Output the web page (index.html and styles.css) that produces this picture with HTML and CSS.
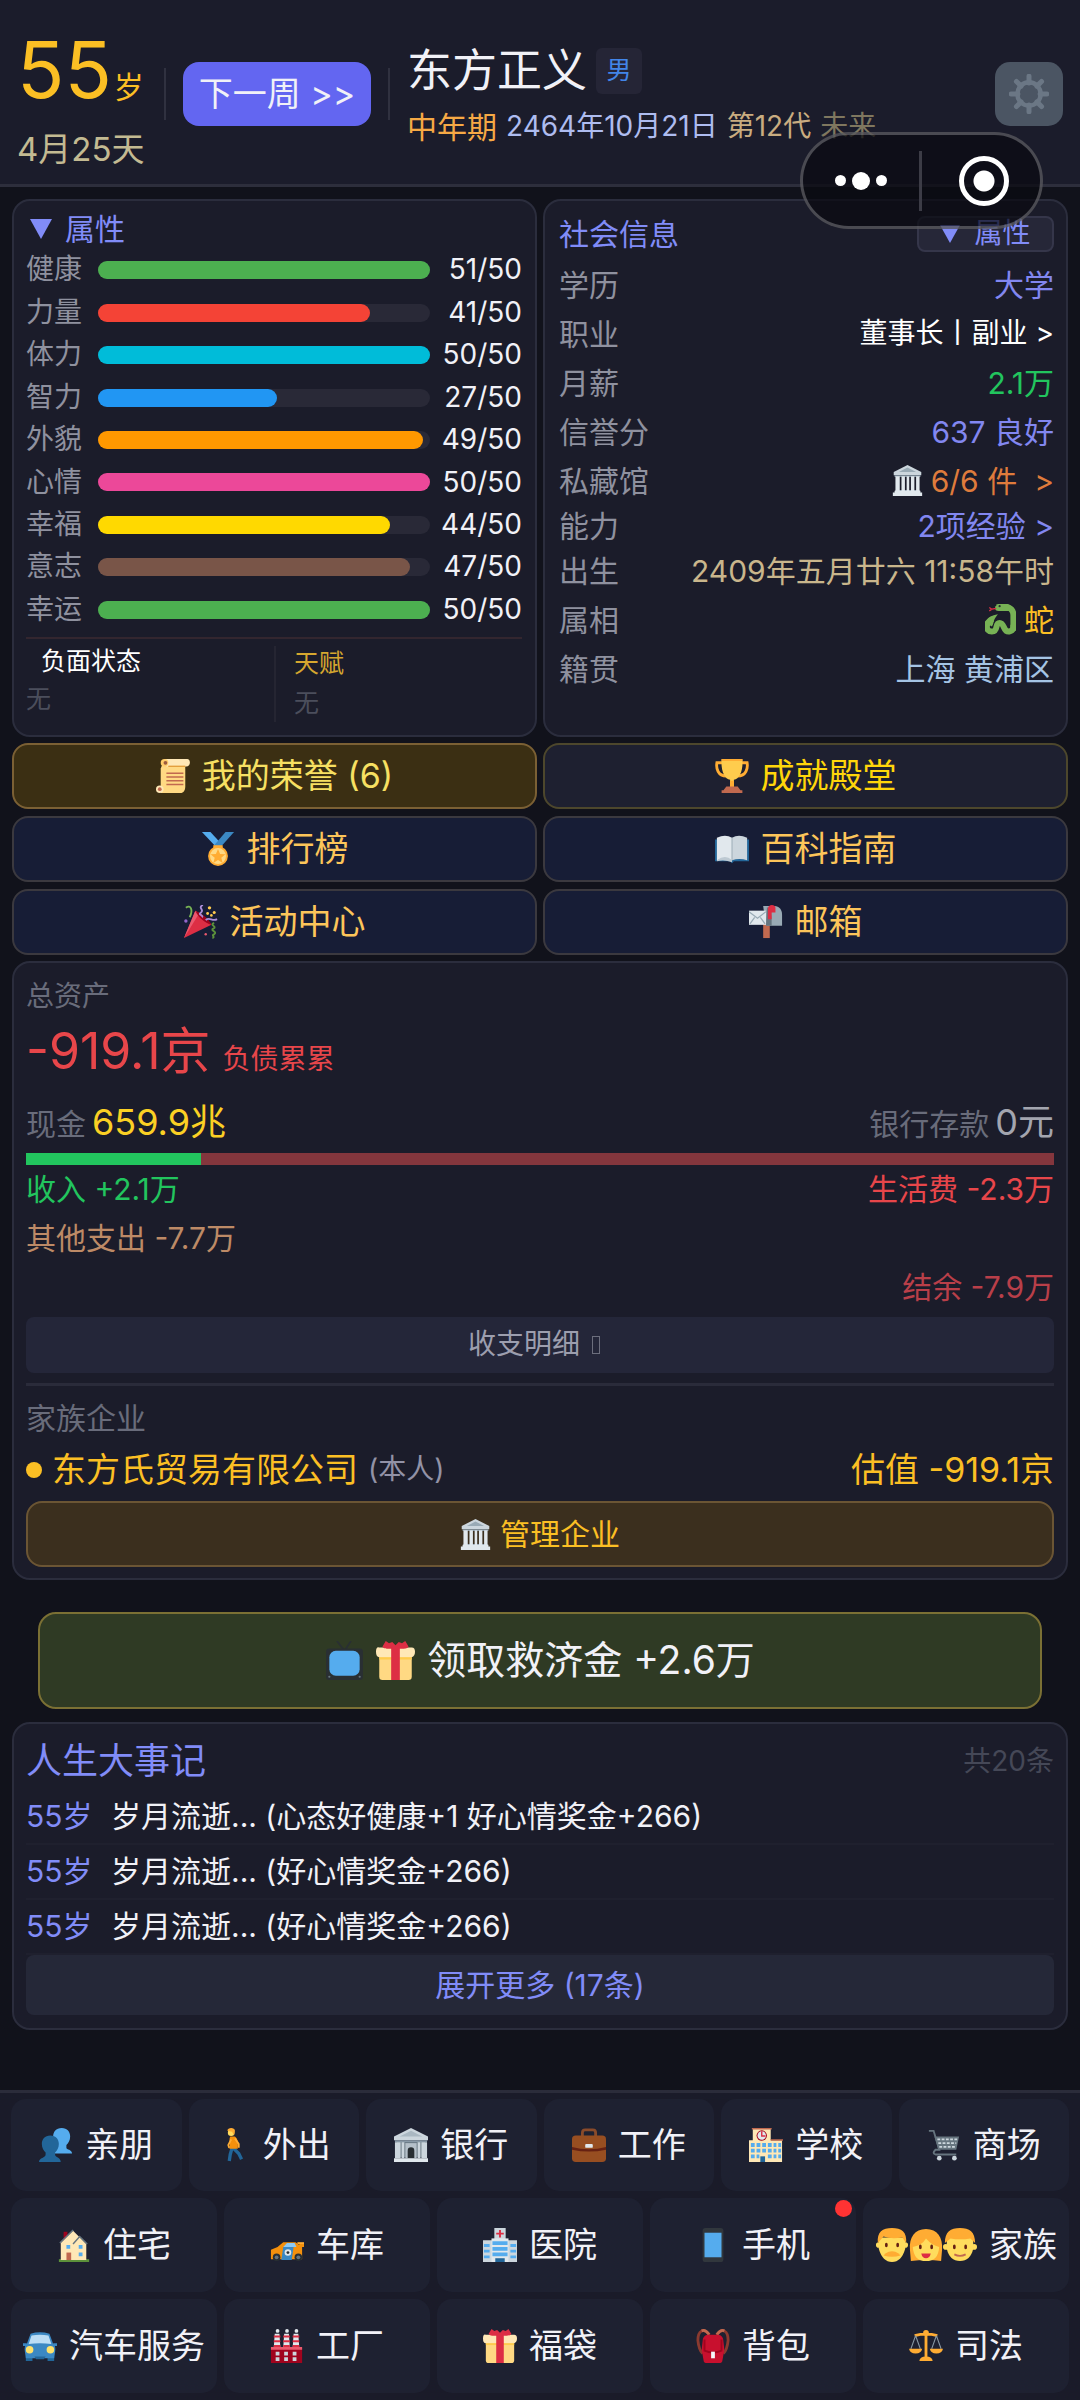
FILE: index.html
```html
<!DOCTYPE html>
<html lang="zh-CN">
<head>
  <meta charset="UTF-8">
  <meta name="viewport" content="width=device-width, initial-scale=1.0">
  <title>东方正义</title>
  <link rel="stylesheet" href="styles.css">
</head>
<body>
  <!-- icon sprite -->
  <svg class="sprite" aria-hidden="true">
    <symbol id="i-gear" viewBox="0 0 36 36">
      <circle cx="18" cy="18" r="10.500" fill="none" stroke="currentColor" stroke-width="4"/>
      <path d="M18 2v6M18 28v6M2 18h6M28 18h6M6.700 6.700l4.200 4.200M25.100 25.100l4.200 4.200M6.700 29.300l4.200-4.200M25.100 10.900l4.200-4.200" stroke="currentColor" stroke-width="4.500" stroke-linecap="round"/>
    </symbol>
    <symbol id="i-temple" viewBox="0 0 36 36">
      <path fill="#ccd6dd" d="M18 0 34 8v4H2V8z"/>
      <path fill="#99aab5" d="M18 3l10 5H8z"/>
      <path fill="#8899a6" d="M3 12h30v2H3zM4 29h28v2H4z"/>
      <path fill="#e1e8ed" d="M4 13h5v17H4zM11 13h4v17h-4zM17 13h3v17h-3zM22 13h4v17h-4zM28 13h4v17h-4zM1 32h34v4H1zM3 30h30v3H3z"/>
    </symbol>
    <symbol id="i-bank" viewBox="0 0 36 36">
      <path fill="#ccd6dd" d="M18 0 36 9v4H0V9z"/>
      <path fill="#aab8c2" d="M18 3l12 6H6z"/>
      <path fill="#66757f" d="M3 14h30v17H3z"/>
      <path fill="#8899a6" d="M1 13h34v2H1z"/>
      <path fill="#ccd6dd" d="M1 15h6v17H1zM8 15h3v17H8zM25 15h3v17h-3zM29 15h6v17h-6z"/>
      <path fill="#b5c0c9" d="M12 16h12v16H12z"/>
      <path fill="#292f33" d="M14.500 32v-8a3.500 3.500 0 0 1 7 0v8z"/>
      <path fill="#e1e8ed" d="M0 32h36v4H0z"/>
    </symbol>
    <symbol id="i-scroll" viewBox="0 0 36 36">
      <path fill="#ffd983" d="M7 5h24v24c0 4-2 7-5 7H5V10z"/>
      <path fill="#ffe8b6" d="M9 0h24c4 0 4 8-1 8H11z"/>
      <path fill="#e39f3d" d="M13 7h18v1.500H13z"/>
      <circle cx="9" cy="4" r="4" fill="#ffcc6b"/><circle cx="10" cy="4" r="2" fill="#9c5b3e"/>
      <circle cx="4" cy="32" r="4" fill="#ffe8b6"/><circle cx="4" cy="32" r="2" fill="#c1694f"/>
      <path d="M11 15h18M11 19h18M11 23h18M11 27h18" stroke="#c1694f" stroke-width="1.600"/>
    </symbol>
    <symbol id="i-trophy" viewBox="0 0 36 36">
      <path d="M9 4H2c-1 6 1 14 10 14M27 4h7c1 6-1 14-10 14" fill="none" stroke="#ffac33" stroke-width="3"/>
      <path fill="#ffcc4d" d="M7 0h22c1 12-3 21-9 22v8h-4v-8C10 21 6 12 7 0z"/>
      <path fill="#ffac33" d="M7 0h22v2H7zM16 23h4v8h-4z"/>
      <path fill="#c1694f" d="M12 29h12l3 4H9zM7 33h22v3H7z"/>
    </symbol>
    <symbol id="i-medal" viewBox="0 0 36 36">
      <path fill="#55acee" d="M1 0h9l12 13-4 5z"/>
      <path fill="#3b88c3" d="M35 0h-9L14 14l4 5z"/>
      <path fill="#ffac33" d="M13 14h10v4H13z"/>
      <circle cx="18" cy="25.500" r="10.500" fill="#ffac33"/>
      <circle cx="18" cy="25.500" r="8.500" fill="#ffd983"/>
      <path fill="#ffac33" d="M18 18l2.200 5.200 5.600.4-4.300 3.600 1.400 5.500-4.900-3-4.900 3 1.400-5.500-4.300-3.600 5.600-.4z"/>
    </symbol>
    <symbol id="i-book" viewBox="0 0 36 36">
      <path fill="#226699" d="M0 8h36v23H20l-2 2-2-2H0z"/>
      <path fill="#e1e8ed" d="M2 6q9-4 16 0v24q-8-3-16 0z"/>
      <path fill="#ccd6dd" d="M34 6q-9-4-16 0v24q8-3 16 0z"/>
      <path d="M18 6v24" stroke="#99aab5"/>
      <path fill="#bdc9d2" d="M2 30q9-7 16 0v2q-8-3-16-1z"/>
    </symbol>
    <symbol id="i-party" viewBox="0 0 36 36">
      <path fill="#dd2e44" d="M0 35 12 6c7 4 13 9 17 15z"/>
      <path fill="#ea596e" d="M0 35 12 6l4 3z"/>
      <path fill="#a0041e" d="M12 6c7 3 14 8 17 15-7-2-14-8-17-15z"/>
      <path d="M2 3c5-4 8 2 4 10" fill="none" stroke="#77b255" stroke-width="2"/>
      <path d="M20 0c-6 3 2 5-2 8-4 2 3 3 1 5M23 16c4-4 7 2 12-1" fill="none" stroke="#aa8dd8" stroke-width="2"/>
      <path d="M32 19c-6 2 4 4-1 6-4 2 5 3 1 6-4 1 2 3-2 4" fill="none" stroke="#5c913b" stroke-width="2"/>
      <g fill="#ffcc4d"><circle cx="27" cy="3" r="1.800"/><circle cx="32" cy="8" r="1.600"/><circle cx="25" cy="9" r="1.500"/><circle cx="29" cy="11" r="1.400"/></g>
      <circle cx="2" cy="17" r="1.800" fill="#9266cc"/><circle cx="23" cy="31" r="1.300" fill="#ea596e"/>
    </symbol>
    <symbol id="i-mailbox" viewBox="0 0 36 36">
      <path fill="#c1694f" d="M15 20h7v15h-7z"/>
      <path fill="#99aab5" d="M15 1h12c5 0 8 4 8 9v12H18z"/>
      <path fill="#66757f" d="M19 2c5 3 5 9 5 20h-6z"/>
      <path fill="#e1e8ed" d="M0 6h18v15H0z"/>
      <path d="M0 7l9 7 9-7M1 20l5-7M17 20l-5-7" fill="none" stroke="#99aab5" stroke-width="1.300"/>
      <path fill="#dd2e44" d="M20 4c0-5 8-5 8-1v5h-4v7h-4z"/>
    </symbol>
    <symbol id="i-snake" viewBox="0 0 36 36">
      <path d="M14 4c10-3 19 0 19 9v18" fill="none" stroke="#77b255" stroke-width="7"/>
      <path fill="#77b255" d="M12 3c3-4 12-3 18-1v6H16c-4 0-5-2-4-5z"/>
      <path d="M9 17C0 21 0 32 8 32s3-10 9-10 4 11 11 10c5-1 5-4 5-8" fill="none" stroke="#77b255" stroke-width="7"/>
      <path fill="#77b255" d="M15 12c-7 1-12 4-14 10l7 4c3-3 0-6 7-14z"/>
      <path d="M13 5l-5 1M8 6 5 4M8 6 5 8" stroke="#dd2e44" stroke-width="1.500"/>
      <circle cx="17" cy="2.500" r="1.300" fill="#292f33"/>
    </symbol>
    <symbol id="i-tv" viewBox="0 0 36 36">
      <path d="M11 0l7 9 6-9" fill="none" stroke="#292f33" stroke-width="1.500"/>
      <rect x="1" y="7" width="34" height="29" rx="3" fill="#292f33"/>
      <rect x="4" y="9" width="28" height="23" rx="6" fill="#55acee"/>
      <circle cx="4" cy="33" r="1" fill="#66757f"/><circle cx="32" cy="33" r="1" fill="#66757f"/>
    </symbol>
    <symbol id="i-gift" viewBox="0 0 36 36">
      <path fill="#ffd983" d="M3 14h30v19c0 2-1 3-3 3H6c-2 0-3-1-3-3z"/>
      <path fill="#ffe8b6" d="M3 6h30q3 0 3 4t-3 5H3q-3 0-3-5t3-4z"/>
      <path fill="#ffcc4d" d="M3 15h30v2H3z"/>
      <path fill="#dd2e44" d="M14 7h8v29h-8zM18 7C14 7 7 8 6 5L9 0l3 2 3-1 3 3 3-3 3 1 3-2 3 5c-1 3-8 2-12 2z"/>
    </symbol>
    <symbol id="i-people" viewBox="0 0 36 36">
      <path fill="#55acee" d="M24 0c6 0 9 4 9 9 0 4-2 7-4 9v3c0 2 6 2 6 6H15V9c0-5 3-9 9-9z"/>
      <path fill="#226699" d="M12 8c6 0 9 4 9 9 0 4-2 7-4 9v2c0 3 6 3 6 8H0c0-5 7-4 7-8v-2c-2-2-4-5-4-9 0-5 3-9 9-9z"/>
    </symbol>
    <symbol id="i-walk" viewBox="0 0 36 36">
      <path d="M17 21l6 6 3 6M16 21l-2 7-1 7" fill="none" stroke="#226699" stroke-width="3.500"/>
      <path fill="#f4900c" d="M14 9h5c4 3 3 9 3 13h-9c2-5-1-9 1-13z"/>
      <path d="M19 11l4 6v4M15 12l-3 6 1 3" fill="none" stroke="#ffac33" stroke-width="2"/>
      <circle cx="15" cy="5" r="3.500" fill="#ffdc5d"/>
      <path fill="#ffac33" d="M11 3c0-4 8-4 8 0l-1 5-2-4z"/>
    </symbol>
    <symbol id="i-briefcase" viewBox="0 0 36 36">
      <path d="M11 9V5q0-3 3-3h8q3 0 3 3v4" fill="none" stroke="#8a4b2a" stroke-width="3"/>
      <rect y="8" width="36" height="28" rx="4" fill="#974e21"/>
      <path fill="#662113" d="M0 20q18 5 36 0v3q-18 4-36 0z"/>
      <rect x="14" y="17" width="8" height="4" rx="1" fill="#e1e8ed"/>
    </symbol>
    <symbol id="i-school" viewBox="0 0 36 36">
      <path fill="#ffe8b6" d="M4 0h19v13h12v23H0V13h4z"/>
      <path fill="#c1694f" d="M3 0h21v1.500H3zM23 12h13v1.500H23z"/>
      <g fill="#55acee"><path d="M2 16h4v4H2zM8 16h4v4H8zM14 16h4v4h-4zM20 16h4v4h-4zM26 16h3v4h-3zM31 16h3v4h-3zM2 22h4v4H2zM8 22h4v4H8zM14 22h4v4h-4zM20 22h4v4h-4zM26 22h3v4h-3zM31 22h3v4h-3zM2 28h4v4H2zM8 28h3v4H8zM20 28h4v4h-4zM26 28h3v4h-3zM31 28h3v4h-3z"/></g>
      <path fill="#226699" d="M12 30h5v6h-5z"/>
      <circle cx="13.500" cy="8" r="5.500" fill="#a0041e"/><circle cx="13.500" cy="8" r="4.500" fill="#e1e8ed"/>
      <path d="M13.500 3.500V8.500h4" fill="none" stroke="#dd2e44" stroke-width="1.500"/>
    </symbol>
    <symbol id="i-cart" viewBox="0 0 36 36">
      <path d="M2 3h5l6 20H9q-4 4 0 5h22" fill="none" stroke="#66757f" stroke-width="2"/>
      <path fill="#66757f" d="M8 9h26l-3 14H12z"/>
      <path d="M11 12h21M12 16h19M13 20h18" stroke="#ccd6dd" stroke-width="2" stroke-dasharray="3 1.500"/>
      <circle cx="13" cy="32" r="2.500" fill="#ccd6dd"/><circle cx="29" cy="32" r="2.500" fill="#ccd6dd"/>
    </symbol>
    <symbol id="i-house" viewBox="0 0 36 36">
      <path fill="#5c913b" d="M2 33h32v3H2z"/>
      <path fill="#a0041e" d="M7 4h4v10H7z"/>
      <path fill="#ffe8b6" d="M4 16 17 3l14 14v17H4z"/>
      <path d="M3 16 17 2M17 17l7-8 8 8" fill="none" stroke="#66757f" stroke-width="1.500"/>
      <path fill="#55acee" d="M10 18h4v4h-4zM23 18h4v4h-4zM23 26h4v4h-4z"/>
      <path fill="#c1694f" d="M10 26h5v8h-5z"/>
    </symbol>
    <symbol id="i-racecar" viewBox="0 0 36 36">
      <path fill="#f4900c" d="M1 33V23l7-3 6-5h13l4 3v-1h5v3h-2v13z"/>
      <path fill="#ffac33" d="M29 15h7v2h-7z"/>
      <path fill="#8ccaf7" d="M14 20l4-4h8l2 4z"/>
      <path fill="#3b88c3" d="M14 20h11l-2 14H12z"/>
      <circle cx="19" cy="26" r="3.500" fill="#e1e8ed"/><circle cx="19" cy="26" r="1.500" fill="#292f33"/>
      <circle cx="7" cy="31" r="4" fill="#292f33"/><circle cx="7" cy="31" r="2" fill="#66757f"/>
      <circle cx="30" cy="31" r="4" fill="#292f33"/><circle cx="30" cy="31" r="2" fill="#66757f"/>
    </symbol>
    <symbol id="i-hospital" viewBox="0 0 36 36">
      <path fill="#ccd6dd" d="M12 0h12v12H12zM0 13h36v23H0z"/>
      <path fill="#e1e8ed" d="M9 11h18v25H9z"/>
      <path fill="#55acee" d="M10 14h16v4H10zM10 20h16v4H10zM10 26h16v4H10zM1 17h6v3H1zM1 23h6v3H1zM1 29h6v3H1zM29 17h6v3h-6zM29 23h6v3h-6zM29 29h6v3h-6z"/>
      <path fill="#226699" d="M13 32h10v4H13z"/>
      <path d="M18 2v8M14 6h8" stroke="#dd2e44" stroke-width="2"/>
    </symbol>
    <symbol id="i-phone" viewBox="0 0 36 36">
      <rect x="7" width="22" height="36" rx="3" fill="#31373d"/>
      <path fill="#55acee" d="M9 5h18v26H9z"/>
    </symbol>
    <symbol id="i-man" viewBox="0 0 36 36">
      <circle cx="4" cy="18" r="3" fill="#ffdc5d"/><circle cx="32" cy="18" r="3" fill="#ffdc5d"/>
      <path fill="#ffdc5d" d="M4 10h28v12q-4 14-14 14T4 22z"/>
      <path fill="#ffac33" d="M3 16C2 4 8 0 18 0s16 4 15 16l-4-6q-12 2-20-1z"/>
      <ellipse cx="12" cy="18" rx="1.500" ry="2.500" fill="#662113"/><ellipse cx="24" cy="18" rx="1.500" ry="2.500" fill="#662113"/>
      <path fill="#ffac33" d="M11 27q7-5 14 0l2 2q-9 3-18 0z"/>
    </symbol>
    <symbol id="i-woman" viewBox="0 0 36 36">
      <path fill="#ffac33" d="M18 1c12 0 18 9 17 22l-1 12q-15-2-32 0L1 23C0 10 6 1 18 1z"/>
      <path fill="#ffdc5d" d="M4 20Q14 18 18 11q6 7 14 9-1 15-14 15T4 20z"/>
      <ellipse cx="12" cy="20" rx="1.500" ry="2.500" fill="#662113"/><ellipse cx="24" cy="20" rx="1.500" ry="2.500" fill="#662113"/>
      <path fill="#dd2e44" d="M13 27h10q-1 5-5 5t-5-5z"/>
    </symbol>
    <symbol id="i-boy" viewBox="0 0 36 36">
      <circle cx="3" cy="20" r="3" fill="#ffdc5d"/><circle cx="33" cy="20" r="3" fill="#ffdc5d"/>
      <path fill="#ffdc5d" d="M4 10h28v12q-3 13-14 13T4 22z"/>
      <path fill="#ffac33" d="M2 16C2 4 8 0 18 0s16 4 16 16l-5-5q-11 2-21 0z"/>
      <ellipse cx="12" cy="20" rx="1.500" ry="2.500" fill="#662113"/><ellipse cx="24" cy="20" rx="1.500" ry="2.500" fill="#662113"/>
      <path d="M12 28q6 3 12 0" fill="none" stroke="#c1694f" stroke-width="2"/>
    </symbol>
    <symbol id="i-car" viewBox="0 0 36 36">
      <path fill="#226699" d="M3 29h7v5H3zM26 29h7v5h-7z"/>
      <path fill="#3b88c3" d="M8 5q10-3 20 0l4 11q3 2 2 8l-1 7H3l-1-7q-1-6 2-8zM0 15h4v3H0zM32 15h4v3h-4z"/>
      <path fill="#bbddf5" d="M9 7q9-2 18 0l3 9q-12-2-24 0z"/>
      <circle cx="7" cy="22" r="4" fill="#ffe26b"/><circle cx="29" cy="22" r="4" fill="#ffe26b"/>
      <path fill="#226699" d="M12 29h12l-2 3h-8z"/>
    </symbol>
    <symbol id="i-factory" viewBox="0 0 36 36">
      <path fill="#e1e8ed" d="M5 5h5l1 15H4zM15 5h5l1 15h-7zM25 5h5l1 15h-7z"/>
      <path d="M4 8h7M4 13h7M4 18h7M14 8h7M14 13h7M14 18h7M24 8h7M24 13h7M24 18h7" stroke="#dd2e44" stroke-width="2"/>
      <circle cx="8" cy="2" r="2" fill="#e1e8ed"/><circle cx="18" cy="2" r="2" fill="#e1e8ed"/><circle cx="28" cy="2" r="2" fill="#e1e8ed"/>
      <path fill="#a0041e" d="M1 20h33v16H1z"/>
      <path fill="#ea596e" d="M1 19h33v3H1z"/>
      <path fill="#ccd6dd" d="M6 24h4v4H6zM15 24h4v4h-4zM24 24h4v4h-4zM6 30h4v4H6zM15 30h4v4h-4zM24 30h4v4h-4z"/>
    </symbol>
    <symbol id="i-backpack" viewBox="0 0 36 36">
      <path d="M14 6C8-2 2 2 2 12q1 10 5 14M22 6c6-8 12-4 12 6q-1 10-5 14" fill="none" stroke="#8b3a2f" stroke-width="3"/>
      <path d="M14 6Q10 0 6 2M22 6q4-6 8-4" fill="none" stroke="#c1694f" stroke-width="3"/>
      <path fill="#c8102e" d="M12 6h12q5 1 5 7l1 9-2 11q0 3-4 3H12q-4 0-4-3L6 22l1-9q0-6 5-7z"/>
      <path d="M9 11v12q9 4 18 0V11" fill="none" stroke="#a0041e" stroke-width="2"/>
      <path fill="#f5f8fa" d="M16 24h4v7h-4z"/>
    </symbol>
    <symbol id="i-scales" viewBox="0 0 36 36">
      <path d="M18 3v28M6 7q12-3 24 0" fill="none" stroke="#ffac33" stroke-width="3"/>
      <circle cx="18" cy="4" r="3" fill="#ffac33"/>
      <path d="M7 7 2 21M7 7l5 14M29 7l-5 14M29 7l5 14" stroke="#8899a6" stroke-width="1.200"/>
      <path fill="#ffac33" d="M0 21h14q-1 5-7 5t-7-5zM22 21h14q-1 5-7 5t-7-5zM11 34q0-5 7-5t7 5z"/>
    </symbol>
  </svg>

  <header class="topbar">
    <div class="age">
      <div class="age-num">55<span>岁</span></div>
      <div class="age-date">4月25天</div>
    </div>
    <span class="divider"></span>
    <button type="button" class="next-btn">下一周 &gt;&gt;</button>
    <span class="divider"></span>
    <div class="profile">
      <div class="profile-name"><h1>东方正义</h1><span class="gender">男</span></div>
      <div class="profile-meta">
        <span class="stage">中年期</span>
        <span class="date">2464年10月21日</span>
        <span class="generation">第12代</span>
        <span class="era">未来</span>
      </div>
    </div>
    <button type="button" class="settings" aria-label="设置"><svg><use href="#i-gear"/></svg></button>
  </header>

  <div class="capsule">
    <button type="button" aria-label="更多"><i class="dot"></i><i class="dot big"></i><i class="dot"></i></button>
    <button type="button" aria-label="关闭"><i class="ring"></i></button>
  </div>

  <main>
    <div class="columns">
      <section class="card stats">
        <h2><i class="tri"></i>属性</h2>
        <div class="stat-list">
          <div class="stat"><span>健康</span><div class="bar"><div class="fill green" style="width: 100%"></div></div><b>51/50</b></div>
          <div class="stat"><span>力量</span><div class="bar"><div class="fill red" style="width: 82%"></div></div><b>41/50</b></div>
          <div class="stat"><span>体力</span><div class="bar"><div class="fill cyan" style="width: 100%"></div></div><b>50/50</b></div>
          <div class="stat"><span>智力</span><div class="bar"><div class="fill blue" style="width: 54%"></div></div><b>27/50</b></div>
          <div class="stat"><span>外貌</span><div class="bar"><div class="fill orange" style="width: 98%"></div></div><b>49/50</b></div>
          <div class="stat"><span>心情</span><div class="bar"><div class="fill pink" style="width: 100%"></div></div><b>50/50</b></div>
          <div class="stat"><span>幸福</span><div class="bar"><div class="fill yellow" style="width: 88%"></div></div><b>44/50</b></div>
          <div class="stat"><span>意志</span><div class="bar"><div class="fill brown" style="width: 94%"></div></div><b>47/50</b></div>
          <div class="stat"><span>幸运</span><div class="bar"><div class="fill green" style="width: 100%"></div></div><b>50/50</b></div>
        </div>
        <div class="traits">
          <div class="debuff"><h3>负面状态</h3><p>无</p></div>
          <div class="talent"><h3>天赋</h3><p>无</p></div>
        </div>
      </section>

      <section class="card social">
        <div class="social-head"><h2>社会信息</h2><button type="button"><i class="tri"></i>属性</button></div>
        <dl>
          <div class="info"><dt>学历</dt><dd class="violet">大学</dd></div>
          <div class="info"><dt>职业</dt><dd><a href="#" class="job">董事长丨副业 &gt;</a></dd></div>
          <div class="info"><dt>月薪</dt><dd class="income">2.1万</dd></div>
          <div class="info"><dt>信誉分</dt><dd class="violet">637 良好</dd></div>
          <div class="info"><dt>私藏馆</dt><dd><a href="#" class="museum"><svg><use href="#i-temple"/></svg>6/6 件 <span>&gt;</span></a></dd></div>
          <div class="info compact"><dt>能力</dt><dd><a href="#" class="violet">2项经验 &gt;</a></dd></div>
          <div class="info compact"><dt>出生</dt><dd class="birth">2409年五月廿六 11:58午时</dd></div>
          <div class="info"><dt>属相</dt><dd class="zodiac"><svg><use href="#i-snake"/></svg>蛇</dd></div>
          <div class="info"><dt>籍贯</dt><dd class="origin">上海 黄浦区</dd></div>
        </dl>
      </section>
    </div>

    <div class="links">
      <button type="button" class="honor"><svg><use href="#i-scroll"/></svg>我的荣誉 (6)</button>
      <button type="button" class="hall"><svg><use href="#i-trophy"/></svg>成就殿堂</button>
      <button type="button"><svg><use href="#i-medal"/></svg>排行榜</button>
      <button type="button"><svg><use href="#i-book"/></svg>百科指南</button>
      <button type="button"><svg><use href="#i-party"/></svg>活动中心</button>
      <button type="button"><svg><use href="#i-mailbox"/></svg>邮箱</button>
    </div>

    <section class="card assets">
      <h2>总资产</h2>
      <div class="total"><strong>-919.1京</strong><span>负债累累</span></div>
      <div class="money">
        <div>现金<b class="cash">659.9兆</b></div>
        <div>银行存款<b>0元</b></div>
      </div>
      <div class="flow-bar"><div style="width: 17%"></div></div>
      <div class="line"><span class="income">收入 +2.1万</span><span class="cost">生活费 -2.3万</span></div>
      <div class="line"><span class="other">其他支出 -7.7万</span></div>
      <div class="line end"><span class="balance">结余 -7.9万</span></div>
      <button type="button" class="detail-btn">收支明细<i class="box"></i></button>
      <div class="company">
        <h3>家族企业</h3>
        <div class="company-row">
          <i class="bullet"></i><span>东方氏贸易有限公司</span><small>(本人)</small>
          <span class="worth">估值 -919.1京</span>
        </div>
        <button type="button" class="manage-btn"><svg><use href="#i-temple"/></svg>管理企业</button>
      </div>
    </section>

    <button type="button" class="relief-btn"><svg><use href="#i-tv"/></svg><svg><use href="#i-gift"/></svg>领取救济金 +2.6万</button>

    <section class="card events">
      <div class="events-head"><h2>人生大事记</h2><span>共20条</span></div>
      <ul>
        <li><span>55岁</span>岁月流逝... (心态好健康+1 好心情奖金+266)</li>
        <li><span>55岁</span>岁月流逝... (好心情奖金+266)</li>
        <li><span>55岁</span>岁月流逝... (好心情奖金+266)</li>
      </ul>
      <button type="button" class="more-btn">展开更多 (17条)</button>
    </section>
  </main>

  <nav class="bottom-nav">
    <div class="nav-row six">
      <button type="button"><svg><use href="#i-people"/></svg>亲朋</button>
      <button type="button"><svg><use href="#i-walk"/></svg>外出</button>
      <button type="button"><svg><use href="#i-bank"/></svg>银行</button>
      <button type="button"><svg><use href="#i-briefcase"/></svg>工作</button>
      <button type="button"><svg><use href="#i-school"/></svg>学校</button>
      <button type="button"><svg><use href="#i-cart"/></svg>商场</button>
    </div>
    <div class="nav-row">
      <button type="button"><svg><use href="#i-house"/></svg>住宅</button>
      <button type="button"><svg><use href="#i-racecar"/></svg>车库</button>
      <button type="button"><svg><use href="#i-hospital"/></svg>医院</button>
      <button type="button"><svg><use href="#i-phone"/></svg>手机<i class="badge"></i></button>
      <button type="button"><span class="faces"><svg><use href="#i-man"/></svg><svg><use href="#i-woman"/></svg><svg><use href="#i-boy"/></svg></span>家族</button>
    </div>
    <div class="nav-row">
      <button type="button"><svg><use href="#i-car"/></svg>汽车服务</button>
      <button type="button"><svg><use href="#i-factory"/></svg>工厂</button>
      <button type="button"><svg><use href="#i-gift"/></svg>福袋</button>
      <button type="button"><svg><use href="#i-backpack"/></svg>背包</button>
      <button type="button"><svg><use href="#i-scales"/></svg>司法</button>
    </div>
  </nav>
</body>
</html>
```
FILE: styles.css
```css
* {
  box-sizing: border-box;
}

body {
  margin: 0;
  min-height: 100vh;
  display: flex;
  flex-direction: column;
  background-color: #11121b;
  color: #f1f1f7;
  font-family: Inter, "Noto Sans CJK SC", sans-serif;
  font-size: 30px;
  line-height: 1.2;
}

h1, h2, h3, p, ul, dl, dd {
  margin: 0;
  padding: 0;
  font-weight: 400;
}

b, strong {
  font-weight: 400;
}

a {
  color: inherit;
  text-decoration: none;
}

button {
  display: flex;
  align-items: center;
  justify-content: center;
  margin: 0;
  padding: 0;
  border: none;
  color: inherit;
  font: inherit;
  white-space: nowrap;
  cursor: pointer;
}

svg {
  flex: none;
  width: 34px;
  height: 34px;
}

.sprite {
  display: none;
}

/* header */
.topbar {
  display: flex;
  align-items: flex-start;
  height: 187px;
  padding: 24px 17px 0;
  background-color: #1b1c2b;
  border-bottom: 3px solid #2d2e3c;
}

.age {
  width: 130px;
}

.age-num {
  color: #fbbf24;
  font-size: 78px;
  line-height: 92px;
  white-space: nowrap;
}

.age-num span {
  margin-left: 2px;
  font-size: 30px;
  line-height: 30px;
}

.age-date {
  margin-top: 13px;
  color: #c3ba92;
  font-size: 33px;
  line-height: 40px;
}

.divider {
  width: 2px;
  height: 52px;
  margin: 44px 17px 0;
  background-color: #303140;
}

.next-btn {
  width: 188px;
  height: 64px;
  margin-top: 38px;
  border-radius: 16px;
  background-color: #6366f1;
  font-size: 34px;
}

.profile {
  flex: 1;
  margin-top: 19px;
}

.profile-name {
  display: flex;
  align-items: center;
  gap: 9px;
  height: 56px;
}

h1 {
  font-size: 45px;
}

.gender {
  width: 46px;
  height: 46px;
  border-radius: 6px;
  background-color: #252536;
  color: #4285e8;
  font-size: 25px;
  line-height: 44px;
  text-align: center;
}

.profile-meta {
  display: flex;
  align-items: center;
  gap: 9px;
  height: 56px;
  font-size: 28px;
  white-space: nowrap;
}

.stage {
  color: #f6a945;
  font-size: 30px;
}

.date {
  color: #aebcf0;
}

.generation {
  color: #c9ac80;
}

.era {
  color: #7f775f;
}

.settings {
  width: 68px;
  height: 64px;
  margin-top: 38px;
  border-radius: 15px;
  background-color: #4b5563;
  color: #6b7785;
}

.settings svg {
  width: 40px;
  height: 40px;
}

.capsule {
  position: absolute;
  top: 132px;
  right: 37px;
  display: grid;
  grid-template-columns: 116px 1fr;
  width: 243px;
  height: 97px;
  border: 3px solid rgba(255, 255, 255, 0.25);
  border-radius: 49px;
  background-color: rgba(10, 10, 16, 0.72);
}

.capsule button {
  gap: 6px;
  background: none;
}

.capsule button + button::before {
  content: "";
  width: 3px;
  height: 60px;
  margin-right: auto;
  background-color: #3c3c46;
}

.capsule .dot {
  width: 11px;
  height: 11px;
  border-radius: 50%;
  background-color: #fff;
}

.capsule .big {
  width: 18px;
  height: 18px;
}

.ring {
  width: 50px;
  height: 50px;
  margin-right: auto;
  border: 5px solid #fff;
  border-radius: 50%;
  background: radial-gradient(circle, #fff 10px, transparent 11px);
}

/* panels */
main {
  display: flex;
  flex-direction: column;
  gap: 6px;
  padding: 12px;
}

.card {
  border: 2px solid #2b2d3d;
  border-radius: 18px;
  background-color: #1b1c2a;
}

.columns {
  display: grid;
  grid-template-columns: 1fr 1fr;
  gap: 6px;
}

.stats {
  padding: 8px 13px 13px 12px;
}

h2 {
  color: #818cf8;
  font-size: 30px;
}

.tri {
  border: 11px solid transparent;
  border-top: 20px solid #818cf8;
  border-bottom: none;
}

.stats h2 {
  display: flex;
  align-items: center;
  gap: 13px;
  height: 40px;
  padding-left: 4px;
}

.stat-list {
  display: flex;
  flex-direction: column;
  height: 382px;
}

.stat {
  flex: 1;
  display: flex;
  align-items: center;
  font-size: 28px;
}

.stat > span {
  width: 72px;
  color: #8f919f;
}

.stat b {
  width: 92px;
  text-align: right;
}

.bar {
  flex: 1;
  height: 18px;
  border-radius: 9px;
  background-color: #292937;
}

.fill {
  height: 18px;
  border-radius: 9px;
}

.green { background-color: #4caf50; }
.red { background-color: #f44336; }
.cyan { background-color: #00bcd9; }
.blue { background-color: #2196f3; }
.orange { background-color: #ff9800; }
.pink { background-color: #ec4899; }
.yellow { background-color: #ffd900; }
.brown { background-color: #795548; }

.traits {
  display: grid;
  grid-template-columns: 1fr 1fr;
  margin-top: 6px;
  padding-top: 7px;
  border-top: 2px solid #33262f;
  font-size: 25px;
  line-height: 30px;
}

.traits h3 {
  font-size: 25px;
}

.traits p {
  margin-top: 8px;
  color: #4b4e5c;
}

.debuff h3 {
  padding-left: 15px;
  color: #fff;
}

.talent {
  padding: 2px 0 4px 18px;
  border-left: 2px solid #252532;
}

.talent h3 {
  color: #d6a72f;
}

.talent p {
  margin-top: 10px;
}

.social {
  padding: 15px 12px 20px 14px;
}

.social-head {
  display: flex;
  align-items: center;
  justify-content: space-between;
  height: 36px;
  margin-bottom: 8px;
}

.social-head button {
  gap: 14px;
  width: 137px;
  height: 36px;
  border: 2px solid #35364a;
  border-radius: 8px;
  background-color: #262738;
  color: #818cf8;
  font-size: 28px;
}

.social-head .tri {
  border-width: 18px 10px 0;
}

.info {
  display: flex;
  align-items: center;
  justify-content: space-between;
  height: 49px;
}

.compact {
  height: 45px;
  padding-bottom: 4px;
}

.info dt {
  color: #8f919f;
}

.info a {
  display: flex;
  align-items: center;
}

.violet {
  color: #8287f0;
}

.income {
  color: #22c55e;
}

.job {
  color: #fff;
  font-size: 28px;
}

.museum {
  gap: 8px;
  color: #df7b3c;
}

.museum svg,
.zodiac svg {
  width: 31px;
  height: 31px;
}

.museum span {
  margin-left: 9px;
}

.birth {
  color: #c9b68c;
}

.zodiac {
  display: flex;
  align-items: center;
  gap: 8px;
  color: #fbbf24;
}

.origin {
  color: #a5c4e4;
}

/* shortcut buttons */
.links {
  display: grid;
  grid-template-columns: 1fr 1fr;
  gap: 7px 6px;
}

.links button {
  gap: 12px;
  height: 66px;
  border: 2px solid #3b393f;
  border-radius: 16px;
  background-color: #171d36;
  color: #fcc55a;
  font-size: 34px;
}

.links .honor {
  border-color: #7b6034;
  background-color: #3b2f13;
  color: #f7e062;
}

.links .hall {
  border-color: #4d472c;
  background-color: #1e2030;
  color: #ffd60a;
}

/* assets */
.assets {
  padding: 12px 12px 11px;
}

.assets h2 {
  color: #696c7b;
  font-size: 28px;
  line-height: 42px;
}

.total {
  display: flex;
  align-items: baseline;
  gap: 12px;
  color: #e8464a;
  line-height: 68px;
}

.total strong {
  font-size: 50px;
}

.total span {
  font-size: 28px;
}

.money {
  display: flex;
  justify-content: space-between;
  color: #696c7b;
  line-height: 58px;
}

.money b {
  margin-left: 6px;
  color: #a3a5af;
  font-size: 36px;
}

.money .cash {
  color: #fbd024;
}

.flow-bar {
  height: 12px;
  background-color: #84363d;
}

.flow-bar div {
  height: 12px;
  background-color: #22c55e;
}

.line {
  display: flex;
  justify-content: space-between;
  line-height: 49px;
}

.end {
  justify-content: flex-end;
}

.cost { color: #e8464a; }
.other { color: #bd8a66; }
.balance { color: #b93f49; }

.detail-btn {
  gap: 12px;
  width: 100%;
  height: 56px;
  margin-top: 5px;
  border-radius: 8px;
  background-color: #242639;
  color: #9c9eae;
  font-size: 28px;
}

.box {
  width: 8px;
  height: 18px;
  margin-right: 12px;
  border: 1px solid #6c6e7d;
}

.company {
  margin-top: 10px;
  padding-top: 8px;
  border-top: 3px solid #2a2b3a;
}

.company h3 {
  color: #696c7b;
  font-size: 30px;
  line-height: 48px;
}

.company-row {
  display: flex;
  align-items: center;
  gap: 10px;
  height: 56px;
  color: #fbbf24;
  font-size: 34px;
}

.company-row small {
  color: #9292a6;
  font-size: 28px;
}

.bullet {
  width: 16px;
  height: 16px;
  border-radius: 50%;
  background-color: #fbbf24;
}

.worth {
  margin-left: auto;
}

.manage-btn {
  gap: 9px;
  width: 100%;
  height: 66px;
  margin-top: 3px;
  border: 2px solid #6b5534;
  border-radius: 16px;
  background-color: #3b2f1e;
  color: #fbbf24;
}

.manage-btn svg {
  width: 31px;
  height: 31px;
}

.relief-btn {
  gap: 12px;
  height: 97px;
  margin: 26px 26px 7px;
  border: 2px solid #7b7034;
  border-radius: 18px;
  background-color: #2f3a24;
  font-size: 39px;
}

.relief-btn svg {
  width: 39px;
  height: 39px;
}

/* events */
.events {
  padding: 10px 12px 13px;
}

.events-head {
  display: flex;
  align-items: center;
  justify-content: space-between;
  height: 56px;
  color: #454857;
  font-size: 28px;
}

.events h2 {
  font-size: 36px;
}

.events ul {
  list-style: none;
}

.events li {
  display: flex;
  height: 55px;
  border-bottom: 2px solid #1f202e;
  line-height: 53px;
}

.events li span {
  width: 85px;
  color: #818cf8;
}

.more-btn {
  width: 100%;
  height: 60px;
  border-radius: 8px;
  background-color: #252838;
  color: #818cf8;
}

/* bottom navigation */
.bottom-nav {
  display: flex;
  flex-direction: column;
  gap: 7px;
  margin-top: auto;
  padding: 6px 11px 7px;
  border-top: 3px solid #2b2c3a;
  background-color: #1a1b29;
}

.nav-row {
  display: grid;
  grid-template-columns: repeat(5, 1fr);
  gap: 7px;
}

.nav-row button {
  position: relative;
  gap: 12px;
  height: 94px;
  border-radius: 15px;
  background-color: #1e2131;
  font-size: 34px;
}

.six {
  grid-template-columns: repeat(6, 1fr);
}

.six button {
  height: 92px;
}

.faces {
  display: flex;
}

.badge {
  position: absolute;
  top: 2px;
  right: 4px;
  width: 17px;
  height: 17px;
  border-radius: 50%;
  background-color: #ff3333;
}
```
